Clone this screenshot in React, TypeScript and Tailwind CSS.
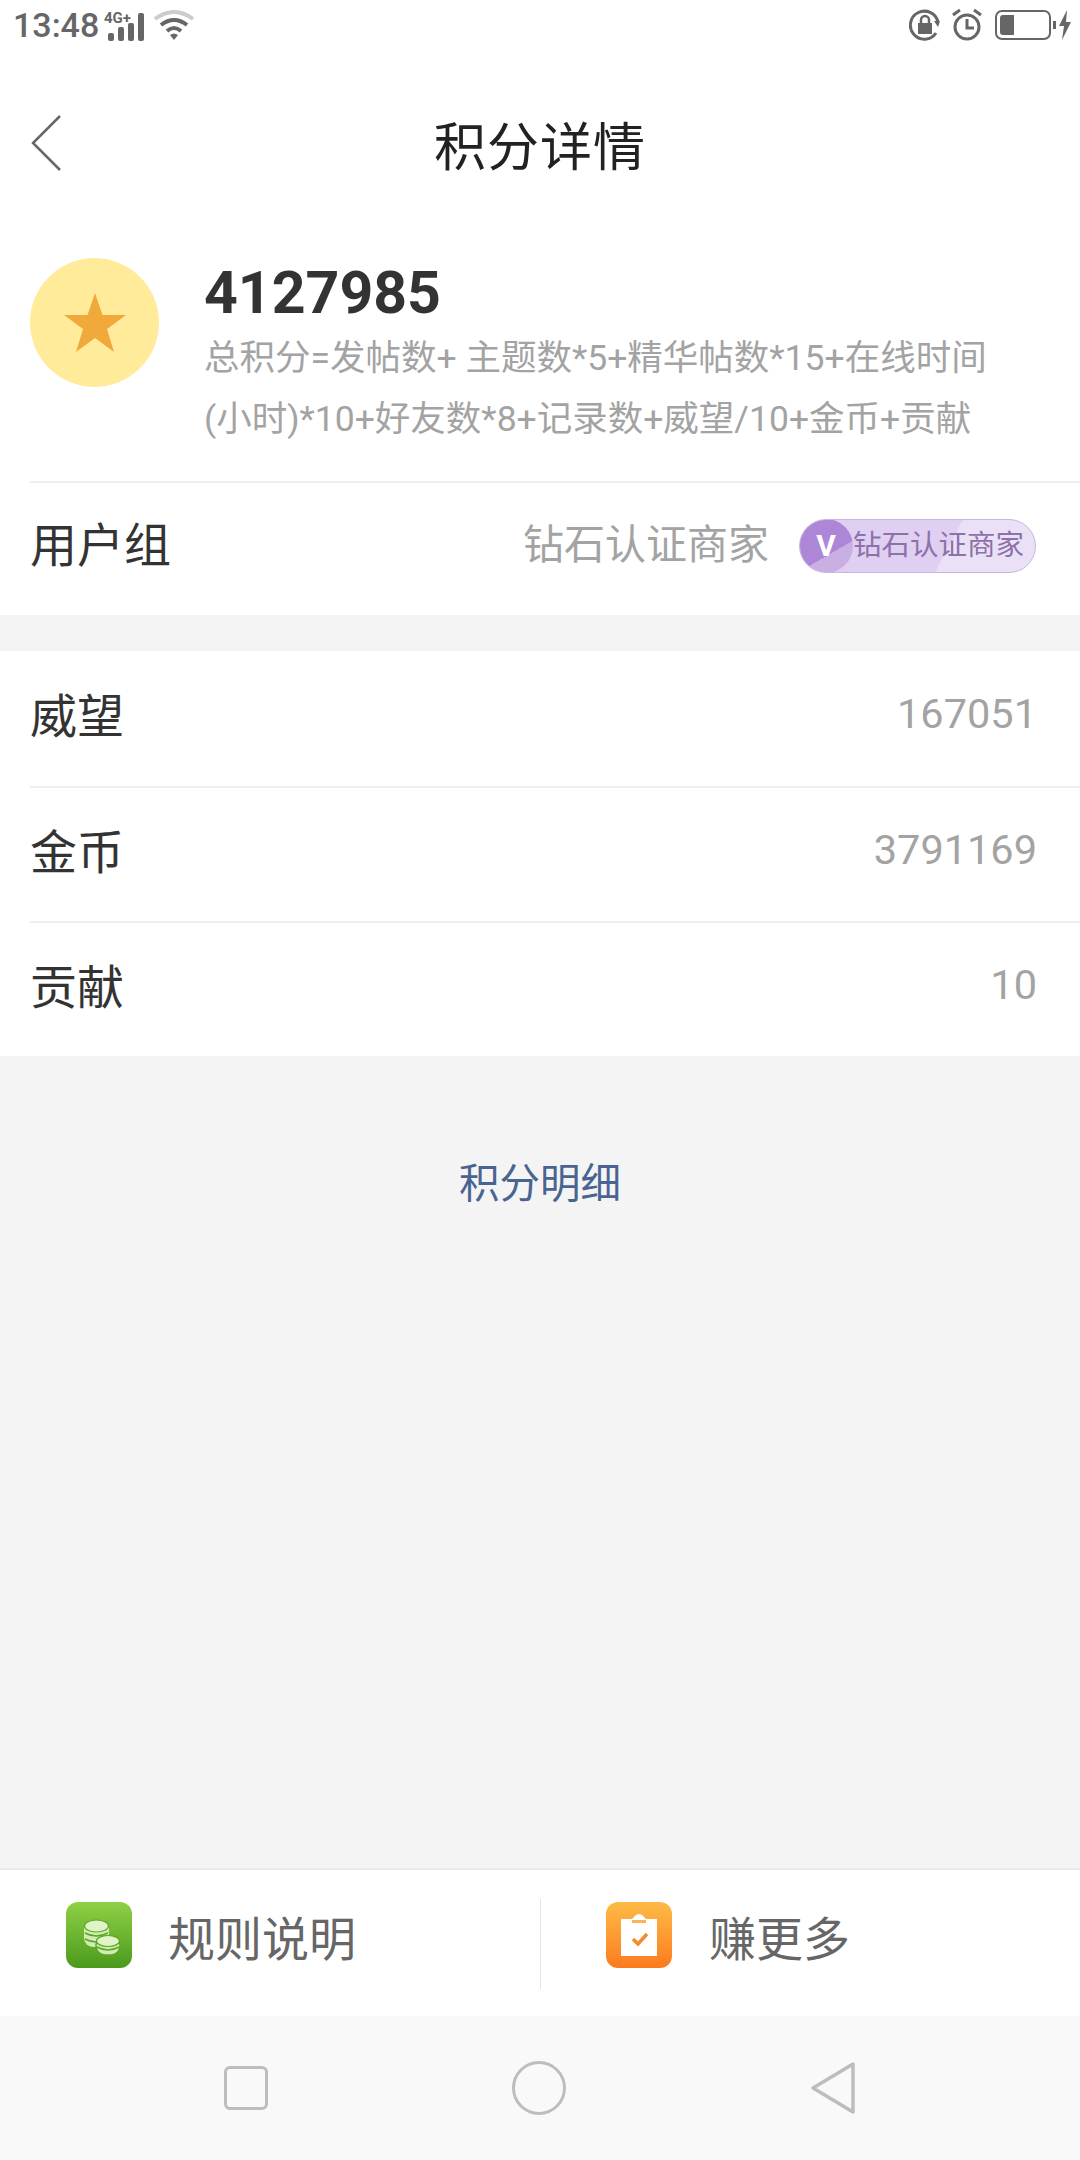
const FONT = "font-['Roboto','Noto_Sans_CJK_SC',sans-serif]";

const stats = [
  { label: "威望", value: "167051" },
  { label: "金币", value: "3791169" },
  { label: "贡献", value: "10" },
];

function StatusBar() {
  return (
    <div className="flex h-[50px] items-center justify-between pl-[13px] pr-[8px] text-[#666]">
      <div className="flex items-center">
        <span className="w-[83px] text-[34px] font-medium leading-none">13:48</span>
        <svg width="42" height="36" viewBox="0 0 42 36" className="ml-[8px]">
          <text x="0" y="16" fontSize="15" fontWeight="700" fill="#666" fontFamily="Roboto">4G+</text>
          <rect x="4" y="26" width="6" height="8" rx="2" fill="#666" />
          <rect x="14" y="20" width="6" height="14" rx="2" fill="#666" />
          <rect x="24" y="16" width="6" height="18" rx="2" fill="#666" />
          <rect x="34" y="6" width="6" height="28" rx="2" fill="#666" />
        </svg>
        <svg width="40" height="30" viewBox="0 0 40 30" className="ml-[8px]">
          <path d="M1 9 Q20 -5 39 9" fill="none" stroke="#ccc" strokeWidth="4" />
          <path d="M7 15 Q20 5 33 15" fill="none" stroke="#666" strokeWidth="4" />
          <path d="M13 21 Q20 15 27 21" fill="none" stroke="#666" strokeWidth="4" />
          <path d="M16 25 Q20 22 24 25 L20 30 Z" fill="#666" />
        </svg>
      </div>
      <div className="flex items-center">
        <svg width="32" height="32" viewBox="0 0 32 32">
          <path d="M27 24 A14 14 0 1 1 29 13" fill="none" stroke="#666" strokeWidth="3" />
          <path d="M25 12 L31 12 L29 18 Z" fill="#666" />
          <rect x="9" y="14" width="14" height="11" fill="#666" />
          <path d="M12 14 V11 A4 4 0 0 1 20 11 V14" fill="none" stroke="#666" strokeWidth="2.5" />
        </svg>
        <svg width="32" height="34" viewBox="0 0 32 34" className="ml-[10px]">
          <circle cx="16" cy="19" r="12" fill="none" stroke="#666" strokeWidth="3" />
          <path d="M16 11 V20 H23" fill="none" stroke="#666" strokeWidth="3" />
          <path d="M2 7 L9 2 M30 7 L23 2" stroke="#666" strokeWidth="3" />
        </svg>
        <div className="ml-[12px] flex h-[30px] w-[56px] items-center rounded-[7px] border-2 border-[#666] p-[3px]">
          <div className="h-full w-[14px] rounded-l-[3px] bg-[#666]" />
        </div>
        <div className="ml-[2px] h-[8px] w-[3px] bg-[#666]" />
        <svg width="14" height="30" viewBox="0 0 14 30" className="ml-[2px]">
          <path d="M9 0 L1 16 H6 L4 30 L13 12 H8 Z" fill="#666" />
        </svg>
      </div>
    </div>
  );
}

function Header() {
  return (
    <div className="relative flex h-[170px] items-center justify-center pt-[28px]">
      <svg width="30" height="56" viewBox="0 0 30 56" className="absolute left-[31px] top-[65px]">
        <path d="M29 1 L2 28 L29 55" fill="none" stroke="#666" strokeWidth="2.5" />
      </svg>
      <h1 className="text-[52px] leading-none tracking-[1px] text-[#222]">积分详情</h1>
    </div>
  );
}

function StarAvatar() {
  return (
    <div className="flex h-[129px] w-[129px] shrink-0 items-center justify-center rounded-full bg-[#ffeb99]">
      <svg width="62" height="60" viewBox="0 0 62 60">
        <path d="M31 0 L38.5 22 L62 22 L43 36 L50 59 L31 45 L12 59 L19 36 L0 22 L23.5 22 Z" fill="#f2a93b" />
      </svg>
    </div>
  );
}

function DiamondBadge() {
  return (
    <div className="relative flex h-[54px] w-[237px] items-center overflow-hidden rounded-full border border-[#c9b3e0] bg-[linear-gradient(118deg,#dfcff1_62%,#ebe1f6_62%)]">
      <div className="absolute left-[-1px] top-[-1px] flex h-[54px] w-[54px] items-center justify-center rounded-full bg-[linear-gradient(150deg,#ad86d8_62%,#c9afe2_62%)]">
        <span className="text-[30px] font-bold leading-none text-white">V</span>
      </div>
      <span className="ml-[53px] whitespace-nowrap text-[28.5px] leading-none text-[#8e70ab]">钻石认证商家</span>
    </div>
  );
}

function CoinsIcon() {
  return (
    <div className="mb-[18px] flex h-[66px] w-[66px] shrink-0 items-center justify-center rounded-[12px] bg-gradient-to-b from-[#8fd145] to-[#4b9a1c] pl-[5px] pt-[5px]">
      <svg width="38" height="37" viewBox="0 0 38 37">
        <rect x="1" y="1" width="25" height="27" rx="9" fill="#cdeeb0" />
        <ellipse cx="13.5" cy="7" rx="12" ry="6" fill="#dff5c8" stroke="#5ea52a" strokeWidth="1.2" />
        <path d="M2 14 Q13 20 25 14 M2 20 Q13 26 25 20" fill="none" stroke="#5ea52a" strokeWidth="1.5" />
        <rect x="13" y="17" width="24" height="19" rx="9" fill="#cdeeb0" stroke="#5ea52a" strokeWidth="1.5" />
        <ellipse cx="25" cy="22" rx="11.5" ry="5.5" fill="#dff5c8" stroke="#5ea52a" strokeWidth="1.2" />
        <path d="M14 28 Q25 34 36 28" fill="none" stroke="#5ea52a" strokeWidth="1.5" />
      </svg>
    </div>
  );
}

function ClipboardIcon() {
  return (
    <div className="mb-[10px] flex h-[66px] w-[66px] shrink-0 items-center justify-center rounded-[12px] bg-gradient-to-b from-[#fdbb45] to-[#fb7a1e]">
      <svg width="36" height="42" viewBox="0 0 36 42">
        <path d="M0 5 H11 L15 1 Q18 -1 21 1 L25 5 H36 V42 H0 Z" fill="#fff" />
        <rect x="11" y="6" width="14" height="3" fill="#fbb25a" />
        <path d="M12 25 L17 30 L26 20" fill="none" stroke="#f58a2c" strokeWidth="3.5" />
      </svg>
    </div>
  );
}

export default function App() {
  return (
    <div className={`${FONT} flex h-[2160px] w-[1080px] flex-col bg-[#f4f4f5]`}>
      <div className="bg-white">
        <StatusBar />
        <Header />
        <div className="flex pl-[30px] pt-[38px]">
          <StarAvatar />
          <div className="ml-[45px] w-[800px]">
            <div className="text-[59px] font-bold leading-[70px] text-[#333]">4127985</div>
            <p className="text-[35.5px] leading-[60.6px] text-[#a3a3a3]">
              总积分=发帖数+ 主题数*5+精华帖数*15+在线时间
              <br />
              (小时)*10+好友数*8+记录数+威望/10+金币+贡献
            </p>
          </div>
        </div>
        <div className="ml-[30px] mt-[32px] flex h-[134px] items-center justify-between border-t-2 border-[#eee] pb-[6px] pr-[44px]">
          <span className="text-[47px] text-[#333]">用户组</span>
          <div className="flex items-center gap-[30px]">
            <span className="text-[41px] text-[#a3a3a3]">钻石认证商家</span>
            <DiamondBadge />
          </div>
        </div>
      </div>

      <div className="mt-[36px] bg-white">
        {stats.map((s, i) => (
          <div
            key={s.label}
            className={`ml-[30px] flex h-[135px] items-center justify-between pb-[3px] pr-[43px] ${i > 0 ? "border-t-2 border-[#eee]" : ""}`}
          >
            <span className="text-[47px] text-[#333]">{s.label}</span>
            <span className="mb-[6px] text-[41.5px] text-[#a3a3a3]">{s.value}</span>
          </div>
        ))}
      </div>

      <div className="flex-1">
        <div className="mt-[105px] text-center text-[40.5px] leading-[46px] text-[#4a6491]">积分明细</div>
      </div>

      <div className="flex h-[148px] items-center border-t-2 border-[#eaeaea] bg-white">
        <div className="mt-[2px] flex h-[90px] w-[541px] items-center border-r border-[#e5e5e5] pl-[66px]">
          <CoinsIcon />
          <span className="mb-[8px] ml-[36px] text-[47px] text-[#666]">规则说明</span>
        </div>
        <div className="mb-[6px] flex items-center pl-[65px]">
          <ClipboardIcon />
          <span className="ml-[37px] text-[47px] text-[#666]">赚更多</span>
        </div>
      </div>

      <div className="flex h-[144px] items-center justify-between bg-[#f9f9f9] pl-[224px] pr-[224px]">
        <div className="h-[44px] w-[44px] rounded-[6px] border-[3px] border-[#bdbdbd]" />
        <div className="h-[54px] w-[54px] rounded-full border-[3px] border-[#bdbdbd]" />
        <svg width="46" height="54" viewBox="0 0 46 54">
          <path d="M43 3 L3 27 L43 51 Z" fill="none" stroke="#bdbdbd" strokeWidth="3.5" strokeLinejoin="round" />
        </svg>
      </div>
    </div>
  );
}
